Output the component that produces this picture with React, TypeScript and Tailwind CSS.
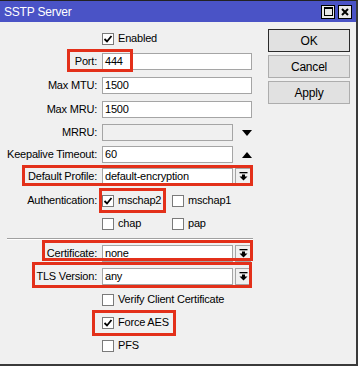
import React from "react";

const font = "font-['Liberation_Sans',Arial,sans-serif]";

function Check({ on }: { on?: boolean }) {
  return (
    <span className="w-[12px] h-[12px] border border-[#7a7a7a] bg-white flex items-center justify-center shrink-0">
      {on && (
        <svg width="10" height="10" viewBox="0 0 10 10">
          <path d="M1.5 5 L4 7.5 L8.5 2" fill="none" stroke="#000" strokeWidth="1.8" />
        </svg>
      )}
    </span>
  );
}

function CheckItem({ label, on, className = "" }: { label: string; on?: boolean; className?: string }) {
  return (
    <div className={`flex items-center gap-[4px] ${className}`}>
      <Check on={on} />
      <span>{label}</span>
    </div>
  );
}

function Label({ text }: { text: string }) {
  return <div className="w-[98px] text-right pr-[1px] shrink-0 whitespace-nowrap">{text}</div>;
}

function Field({ value, w = "w-[150px]", disabled }: { value?: string; w?: string; disabled?: boolean }) {
  return (
    <div
      className={`${w} h-[17px] ml-[4px] border border-[#a5a5a5] px-[2px] flex items-center ${
        disabled ? "bg-[#f0f0f0]" : "bg-white"
      }`}
    >
      {value}
    </div>
  );
}

function DropBtn() {
  return (
    <div className="w-[16px] h-[17px] ml-[2px] border border-[#a5a5a5] bg-[#f0f0f0] flex items-center justify-center">
      <svg width="9" height="9" viewBox="0 0 9 9">
        <rect x="0.5" y="0" width="8" height="1.3" fill="#000" />
        <rect x="3" y="2.5" width="3" height="2.5" fill="#000" />
        <polygon points="0.5,4.5 8.5,4.5 4.5,8.5" fill="#000" />
      </svg>
    </div>
  );
}

function Tri({ up }: { up?: boolean }) {
  return (
    <div className="w-[19px] flex justify-end">
      <svg width="10" height="6" viewBox="0 0 10 6">
        <polygon points={up ? "0,6 10,6 5,0" : "0,0 10,0 5,6"} fill="#000" />
      </svg>
    </div>
  );
}

function Row({ children, className = "" }: { children: React.ReactNode; className?: string }) {
  return <div className={`h-[17px] flex items-center ${className}`}>{children}</div>;
}

function Btn({ text, def }: { text: string; def?: boolean }) {
  return (
    <div
      className={`h-[23px] w-[82px] flex items-center justify-center bg-[#e1e1e1] border ${
        def ? "border-[#2b2b2b]" : "border-[#adadad]"
      } text-[12px]`}
    >
      {text}
    </div>
  );
}

export default function App() {
  return (
    <div className={`relative w-[359px] h-[367px] bg-white text-[11px] tracking-[-0.2px] text-black ${font}`}>
      <div className="w-[358px] h-[366px] flex flex-col bg-[#f0f0f0] border-t border-[#222] border-r-2 border-r-[#3a3a3a] border-b-2 border-b-[#3a3a3a]">
        {/* title bar */}
        <div className="h-[21px] bg-[#4a53c6] flex items-center pl-[4px] pr-[2px]">
          <span className="text-white text-[12px] flex-1">SSTP Server</span>
          <div className="flex gap-[3px] mr-[2px]">
            <div className="w-[14px] h-[14px] border border-black bg-[#e8e8e8] flex items-center justify-center">
              <div className="w-[9px] h-[9px] border border-black border-t-2" />
            </div>
            <div className="w-[14px] h-[14px] border border-black bg-[#e8e8e8] flex items-center justify-center">
              <svg width="8" height="8" viewBox="0 0 8 8">
                <path d="M1 1 L7 7 M7 1 L1 7" stroke="#000" strokeWidth="2" />
              </svg>
            </div>
          </div>
        </div>

        <div className="flex flex-1">
          {/* form */}
          <div className="w-[260px] flex flex-col">
            <Row className="mt-[8px]">
              <div className="w-[102px]" />
              <CheckItem label="Enabled" on />
            </Row>
            <Row className="mt-[6px]">
              <Label text="Port:" />
              <Field value="444" />
            </Row>
            <Row className="mt-[7px]">
              <Label text="Max MTU:" />
              <Field value="1500" />
            </Row>
            <Row className="mt-[7px]">
              <Label text="Max MRU:" />
              <Field value="1500" />
            </Row>
            <Row className="mt-[6px]">
              <Label text="MRRU:" />
              <Field w="w-[131px]" disabled />
              <Tri />
            </Row>
            <Row className="mt-[5px]">
              <Label text="Keepalive Timeout:" />
              <Field w="w-[131px]" value="60" />
              <Tri up />
            </Row>
            <Row className="mt-[5px]">
              <Label text="Default Profile:" />
              <Field w="w-[131px]" value="default-encryption" />
              <DropBtn />
            </Row>
            <Row className="mt-[7px]">
              <Label text="Authentication:" />
              <CheckItem label="mschap2" on className="ml-[4px] w-[70px]" />
              <CheckItem label="mschap1" />
            </Row>
            <Row className="mt-[6px]">
              <div className="w-[102px]" />
              <CheckItem label="chap" className="w-[70px]" />
              <CheckItem label="pap" />
            </Row>
            <div className="mt-[6px] mx-[7px] h-[1px] bg-[#a0a0a0] border-b border-white box-content" />
            <Row className="mt-[5px]">
              <Label text="Certificate:" />
              <Field w="w-[131px]" value="none" />
              <DropBtn />
            </Row>
            <Row className="mt-[6px]">
              <Label text="TLS Version:" />
              <Field w="w-[131px]" value="any" />
              <DropBtn />
            </Row>
            <Row className="mt-[6px]">
              <div className="w-[102px]" />
              <CheckItem label="Verify Client Certificate" />
            </Row>
            <Row className="mt-[6px]">
              <div className="w-[102px]" />
              <CheckItem label="Force AES" on />
            </Row>
            <Row className="mt-[6px]">
              <div className="w-[102px]" />
              <CheckItem label="PFS" />
            </Row>
          </div>

          {/* buttons */}
          <div className="ml-[8px] mt-[7px] flex flex-col gap-[3px]">
            <Btn text="OK" def />
            <Btn text="Cancel" />
            <Btn text="Apply" />
          </div>
        </div>
      </div>

      {/* red annotation boxes */}
      <div className="absolute left-[67px] top-[49px] w-[66px] h-[23px] border-[3px] border-[#e3301a]" />
      <div className="absolute left-[22px] top-[165px] w-[231px] h-[21px] border-[3px] border-[#e3301a]" />
      <div className="absolute left-[99px] top-[188px] w-[67px] h-[25px] border-[3px] border-[#e3301a]" />
      <div className="absolute left-[42px] top-[240px] w-[211px] h-[21px] border-[3px] border-[#e3301a]" />
      <div className="absolute left-[32px] top-[262px] w-[220px] h-[26px] border-[3px] border-[#e3301a]" />
      <div className="absolute left-[92px] top-[310px] w-[84px] h-[26px] border-[3px] border-[#e3301a]" />
    </div>
  );
}
